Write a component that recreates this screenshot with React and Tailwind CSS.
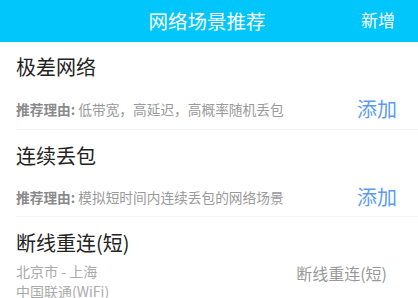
export default function App() {
  const font = { fontFamily: '"Noto Sans CJK SC", "Noto Sans", sans-serif' };
  return (
    <div className="w-[418px] h-[298px] overflow-hidden bg-white" style={font}>
      <div className="h-[42px] bg-[#00c6fb] flex items-center relative">
        <div className="flex-1 text-center text-white text-[19.5px] leading-none pr-[4px]">网络场景推荐</div>
        <div className="absolute right-[23px] top-[11px] text-white text-[17px] leading-none">新增</div>
      </div>
      <div className="pl-4">
        <div className="h-[88px] border-b border-[#f5f5f5] pr-[21px] flex flex-col">
          <div className="pt-[13px] text-[20px] leading-[24px] text-[#222]">极差网络</div>
          <div className="mt-[15px] flex items-center justify-between">
            <div className="text-[13.7px] text-[#999]"><span className="font-bold text-[#8a8a8a]">推荐理由:</span> 低带宽，高延迟，高概率随机丢包</div>
            <div className="text-[20px] text-[#5b9cf0]">添加</div>
          </div>
        </div>
        <div className="h-[87px] border-b border-[#f5f5f5] pr-[21px] flex flex-col">
          <div className="pt-[14px] text-[20px] leading-[24px] text-[#222]">连续丢包</div>
          <div className="mt-[14px] flex items-center justify-between">
            <div className="text-[13.7px] text-[#999]"><span className="font-bold text-[#8a8a8a]">推荐理由:</span> 模拟短时间内连续丢包的网络场景</div>
            <div className="text-[20px] text-[#5b9cf0]">添加</div>
          </div>
        </div>
        <div className="pr-[31px] flex flex-col">
          <div className="pt-[13px] text-[20px] leading-[26px] text-[#222]">断线重连(短)</div>
          <div className="mt-[5px] flex justify-between">
            <div className="text-[14px] leading-[20px] text-[#aaa]">
              <div>北京市 - 上海</div>
              <div>中国联通(WiFi)</div>
            </div>
            <div className="text-[16px] leading-[20px] text-[#999] pt-[2px]">断线重连(短)</div>
          </div>
        </div>
      </div>
    </div>
  );
}
